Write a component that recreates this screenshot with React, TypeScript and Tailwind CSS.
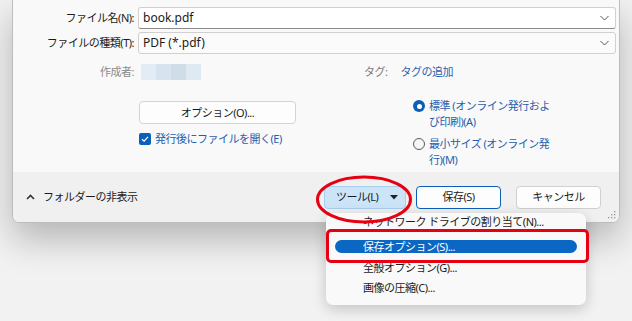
import React from "react";

const jp = "font-['Noto_Sans','Noto_Sans_CJK_JP',sans-serif]";
const txt = "text-[11px] tracking-[-0.5px] leading-[16px]";

function Chevron() {
  return (
    <svg width="9" height="6" viewBox="0 0 9 6" className="text-[#555]">
      <path d="M0.5 1 L4.5 5 L8.5 1" fill="none" stroke="currentColor" strokeWidth="1" />
    </svg>
  );
}

function Combo({ value, white }: { value: string; white?: boolean }) {
  return (
    <div
      className={`flex h-[22px] w-[478px] items-center justify-between rounded-[3px] border border-[#d0d0d0] pl-[4px] pr-[6px] ${
        white ? "bg-white border-b-[#8a8a8a]" : "bg-[#fbfbfb]"
      }`}
    >
      <span className="text-[12px] text-[#1b1b1b]">{value}</span>
      <Chevron />
    </div>
  );
}

function Radio({ on }: { on?: boolean }) {
  return on ? (
    <span className="mt-[2px] flex h-[12px] w-[12px] shrink-0 items-center justify-center rounded-full bg-[#0a5fb8]">
      <span className="h-[5px] w-[5px] rounded-full bg-white" />
    </span>
  ) : (
    <span className="mt-[2px] h-[12px] w-[12px] shrink-0 rounded-full border border-[#5c5c5c] bg-[#f6f6f6]" />
  );
}

export default function App() {
  return (
    <div className={`relative h-[321px] w-[632px] overflow-hidden bg-[#f2f2f2] ${jp}`}>
      {/* dialog */}
      <div className="ml-[12px] flex h-[223px] w-[608px] flex-col overflow-hidden rounded-b-[7px] border-x border-b border-[#bdbdbd] shadow-[0_16px_36px_rgba(0,0,0,0.26)]">
        <div className="h-[173px] bg-[#f9f9f9] pt-[7px]">
          <div className="flex h-[22px] items-center">
            <span className={`w-[125px] pr-[4px] text-right text-[#1b1b1b] ${txt}`}>ファイル名(N):</span>
            <Combo value="book.pdf" white />
          </div>
          <div className="mt-[3px] flex h-[22px] items-center">
            <span className={`w-[125px] pr-[4px] text-right text-[#1b1b1b] ${txt}`}>ファイルの種類(T):</span>
            <Combo value="PDF (*.pdf)" />
          </div>
          <div className="mt-[10px] flex h-[16px] items-center">
            <span className={`w-[125px] pr-[4px] text-right text-[#8a8a8a] ${txt}`}>作成者:</span>
            <div className="ml-[3px] grid h-[16px] w-[60px] grid-cols-4">
              <span className="bg-[#e3ecf4]" />
              <span className="bg-[#d7e4ef]" />
              <span className="bg-[#cfdde9]" />
              <span className="bg-[#dfe9f2]" />
            </div>
            <span className={`ml-[163px] text-[#7a7a7a] ${txt}`}>タグ:</span>
            <span className={`ml-[13px] text-[#1f64b0] ${txt}`}>タグの追加</span>
          </div>
          <div className="mt-[18px] flex items-start pl-[126px]">
            <div className="mt-[3px] w-[157px]">
              <div className={`flex h-[23px] items-center justify-center rounded-[4px] border border-[#d4d4d4] bg-[#fdfdfd] text-[#1b1b1b] ${txt}`}>
                オプション(O)...
              </div>
              <div className="mt-[7px] flex items-center gap-[4px]">
                <span className="flex h-[12px] w-[12px] items-center justify-center rounded-[2px] bg-[#0a5fb8]">
                  <svg width="8" height="8" viewBox="0 0 8 8">
                    <path d="M1 4.2 L3.1 6.2 L7 1.8" fill="none" stroke="#fff" strokeWidth="1.2" />
                  </svg>
                </span>
                <span className={`text-[#1f5fae] ${txt}`}>発行後にファイルを開く(E)</span>
              </div>
            </div>
            <div className="ml-[117px] flex w-[150px] flex-col gap-[6px]">
              <div className="flex gap-[4px]">
                <Radio on />
                <span className={`w-[124px] text-[#1f5fae] ${txt}`}>標準 (オンライン発行および印刷)(A)</span>
              </div>
              <div className="flex gap-[4px]">
                <Radio />
                <span className={`w-[124px] text-[#1f5fae] ${txt}`}>最小サイズ (オンライン発行)(M)</span>
              </div>
            </div>
          </div>
        </div>
        <div className="relative flex h-[50px] items-center bg-[#f0f0f0] pl-[13px] pr-[18px]">
          <svg width="9" height="6" viewBox="0 0 9 6">
            <path d="M1 5 L4.5 1.5 L8 5" fill="none" stroke="#333" strokeWidth="1.6" />
          </svg>
          <span className={`ml-[8px] text-[#1b1b1b] ${txt}`}>フォルダーの非表示</span>
          <div className="flex-1" />
          <div className={`flex h-[23px] w-[82px] items-center rounded-[4px] border border-[#a7cdef] bg-[#cce4f7] pl-[11px] pr-[7px] text-[#1b1b1b] ${txt}`}>
            <span className="flex-1">ツール(L)</span>
            <svg width="8" height="5" viewBox="0 0 8 5">
              <path d="M0 0 H8 L4 4.5 Z" fill="#222" />
            </svg>
          </div>
          <div className={`ml-[10px] flex h-[23px] w-[85px] items-center justify-center rounded-[4px] border border-[#0a5fb8] bg-[#fdfdfd] text-[#1b1b1b] ${txt}`}>
            保存(S)
          </div>
          <div className={`ml-[15px] flex h-[23px] w-[85px] items-center justify-center rounded-[4px] border border-[#d0d0d0] bg-[#fdfdfd] text-[#1b1b1b] ${txt}`}>
            キャンセル
          </div>
          <svg className="absolute bottom-[3px] right-[3px]" width="8" height="8" viewBox="0 0 8 8">
            <g fill="#9a9a9a">
              <rect x="6" y="0" width="1.3" height="1.3" />
              <rect x="3" y="3" width="1.3" height="1.3" />
              <rect x="6" y="3" width="1.3" height="1.3" />
              <rect x="0" y="6" width="1.3" height="1.3" />
              <rect x="3" y="6" width="1.3" height="1.3" />
              <rect x="6" y="6" width="1.3" height="1.3" />
            </g>
          </svg>
        </div>
      </div>

      {/* tools menu */}
      <div className="absolute left-[326px] top-[213px] h-[92px] w-[260px] overflow-hidden rounded-[7px] bg-[#f9f9f9] pt-[1px] shadow-[0_4px_14px_rgba(0,0,0,0.2)]">
        <div className={`pl-[37px] text-[#1b1b1b] ${txt}`}>ネットワーク ドライブの割り当て(N)...</div>
        <div className="ml-[9px] mt-[10px] flex h-[13px] w-[242px] items-center rounded-full bg-[#0a67c4] pl-[28px]">
          <span className={`text-white ${txt}`}>保存オプション(S)...</span>
        </div>
        <div className={`mt-[7px] pl-[37px] text-[#1b1b1b] ${txt}`}>全般オプション(G)...</div>
        <div className={`mt-[4px] pl-[37px] text-[#1b1b1b] ${txt}`}>画像の圧縮(C)...</div>
      </div>

      {/* annotations */}
      <div className="absolute left-[326px] top-[229px] h-[34px] w-[263px] rounded-[5px] border-[3px] border-[#e60012]" />
      <svg className="absolute left-[315px] top-[175px]" width="98" height="49" viewBox="0 0 98 49">
        <ellipse cx="49" cy="24.5" rx="46.5" ry="22.5" fill="none" stroke="#e60012" strokeWidth="3" />
      </svg>
    </div>
  );
}
